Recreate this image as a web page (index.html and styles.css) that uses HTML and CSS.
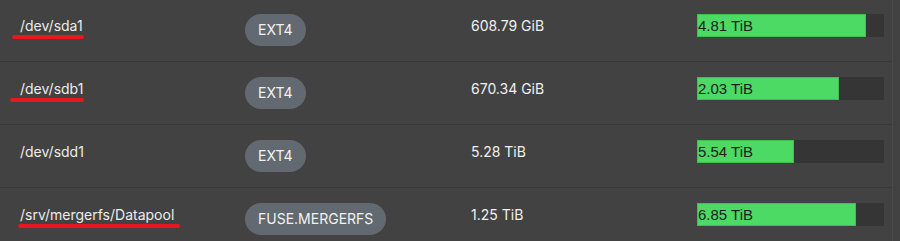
FILE: index.html
```html
<!DOCTYPE html>
<html>
<head>
<meta charset="utf-8">
<link rel="stylesheet" href="styles.css">
</head>
<body>
<div class="table">
  <div class="row">
    <div class="cell path"><span class="mark mark-a">/dev/sda1</span></div>
    <div class="cell"><span class="badge">EXT4</span></div>
    <div class="cell size">608.79 GiB</div>
    <div class="cell"><div class="bar"><div class="fill" style="width:90.2%">4.81 TiB</div></div></div>
  </div>
  <div class="row">
    <div class="cell path"><span class="mark mark-b">/dev/sdb1</span></div>
    <div class="cell"><span class="badge">EXT4</span></div>
    <div class="cell size">670.34 GiB</div>
    <div class="cell"><div class="bar"><div class="fill" style="width:75.9%">2.03 TiB</div></div></div>
  </div>
  <div class="row">
    <div class="cell path"><span>/dev/sdd1</span></div>
    <div class="cell"><span class="badge">EXT4</span></div>
    <div class="cell size">5.28 TiB</div>
    <div class="cell"><div class="bar"><div class="fill" style="width:52%">5.54 TiB</div></div></div>
  </div>
  <div class="row">
    <div class="cell path"><span class="mark mark-c">/srv/mergerfs/Datapool</span></div>
    <div class="cell"><span class="badge">FUSE.MERGERFS</span></div>
    <div class="cell size">1.25 TiB</div>
    <div class="cell"><div class="bar"><div class="fill" style="width:84.9%">6.85 TiB</div></div></div>
  </div>
</div>
</body>
</html>
```
FILE: styles.css
```css
html, body {
  margin: 0;
  padding: 0;
  background: #424242;
  overflow: hidden;
}
body {
  font-family: Inter, "Noto Sans", sans-serif;
  font-size: 14px;
  color: #ececec;
}
.table {
  width: 892px;
  margin-top: -1px;
  border-right: 1px solid #4a4a4a;
}
.row {
  display: grid;
  grid-template-columns: 225px 226px 226px 1fr;
  align-items: start;
  padding: 15px 0 15px 20px;
  border-bottom: 1px solid #383838;
}
.cell {
  line-height: 23px;
  min-height: 32px;
}
.path span {
  display: inline-block;
}
.mark {
  position: relative;
}
.mark::after {
  content: "";
  position: absolute;
  height: 4px;
  border-radius: 2px;
  background: #e5171f;
  top: 21px;
}
.mark-a::after { left: -8px; right: -1px; }
.mark-b::after { left: -10px; right: -1px; }
.mark-c::after { left: -2px; right: -6px; }
.badge {
  display: inline-block;
  height: 32px;
  line-height: 32px;
  padding: 0 13px;
  border-radius: 16px;
  background: #636970;
  color: #f2f2f2;
}
.size {
  color: #f0f0f0;
}
.bar {
  width: 187px;
  height: 23px;
  background: #353535;
}
.fill {
  height: 23px;
  box-sizing: border-box;
  background: #4cd964;
  border: 1px solid #3fbf54;
  font-family: "Liberation Sans", Arial, sans-serif;
  font-size: 15px;
  line-height: 21px;
  color: #1d1d1d;
  white-space: nowrap;
}
```
